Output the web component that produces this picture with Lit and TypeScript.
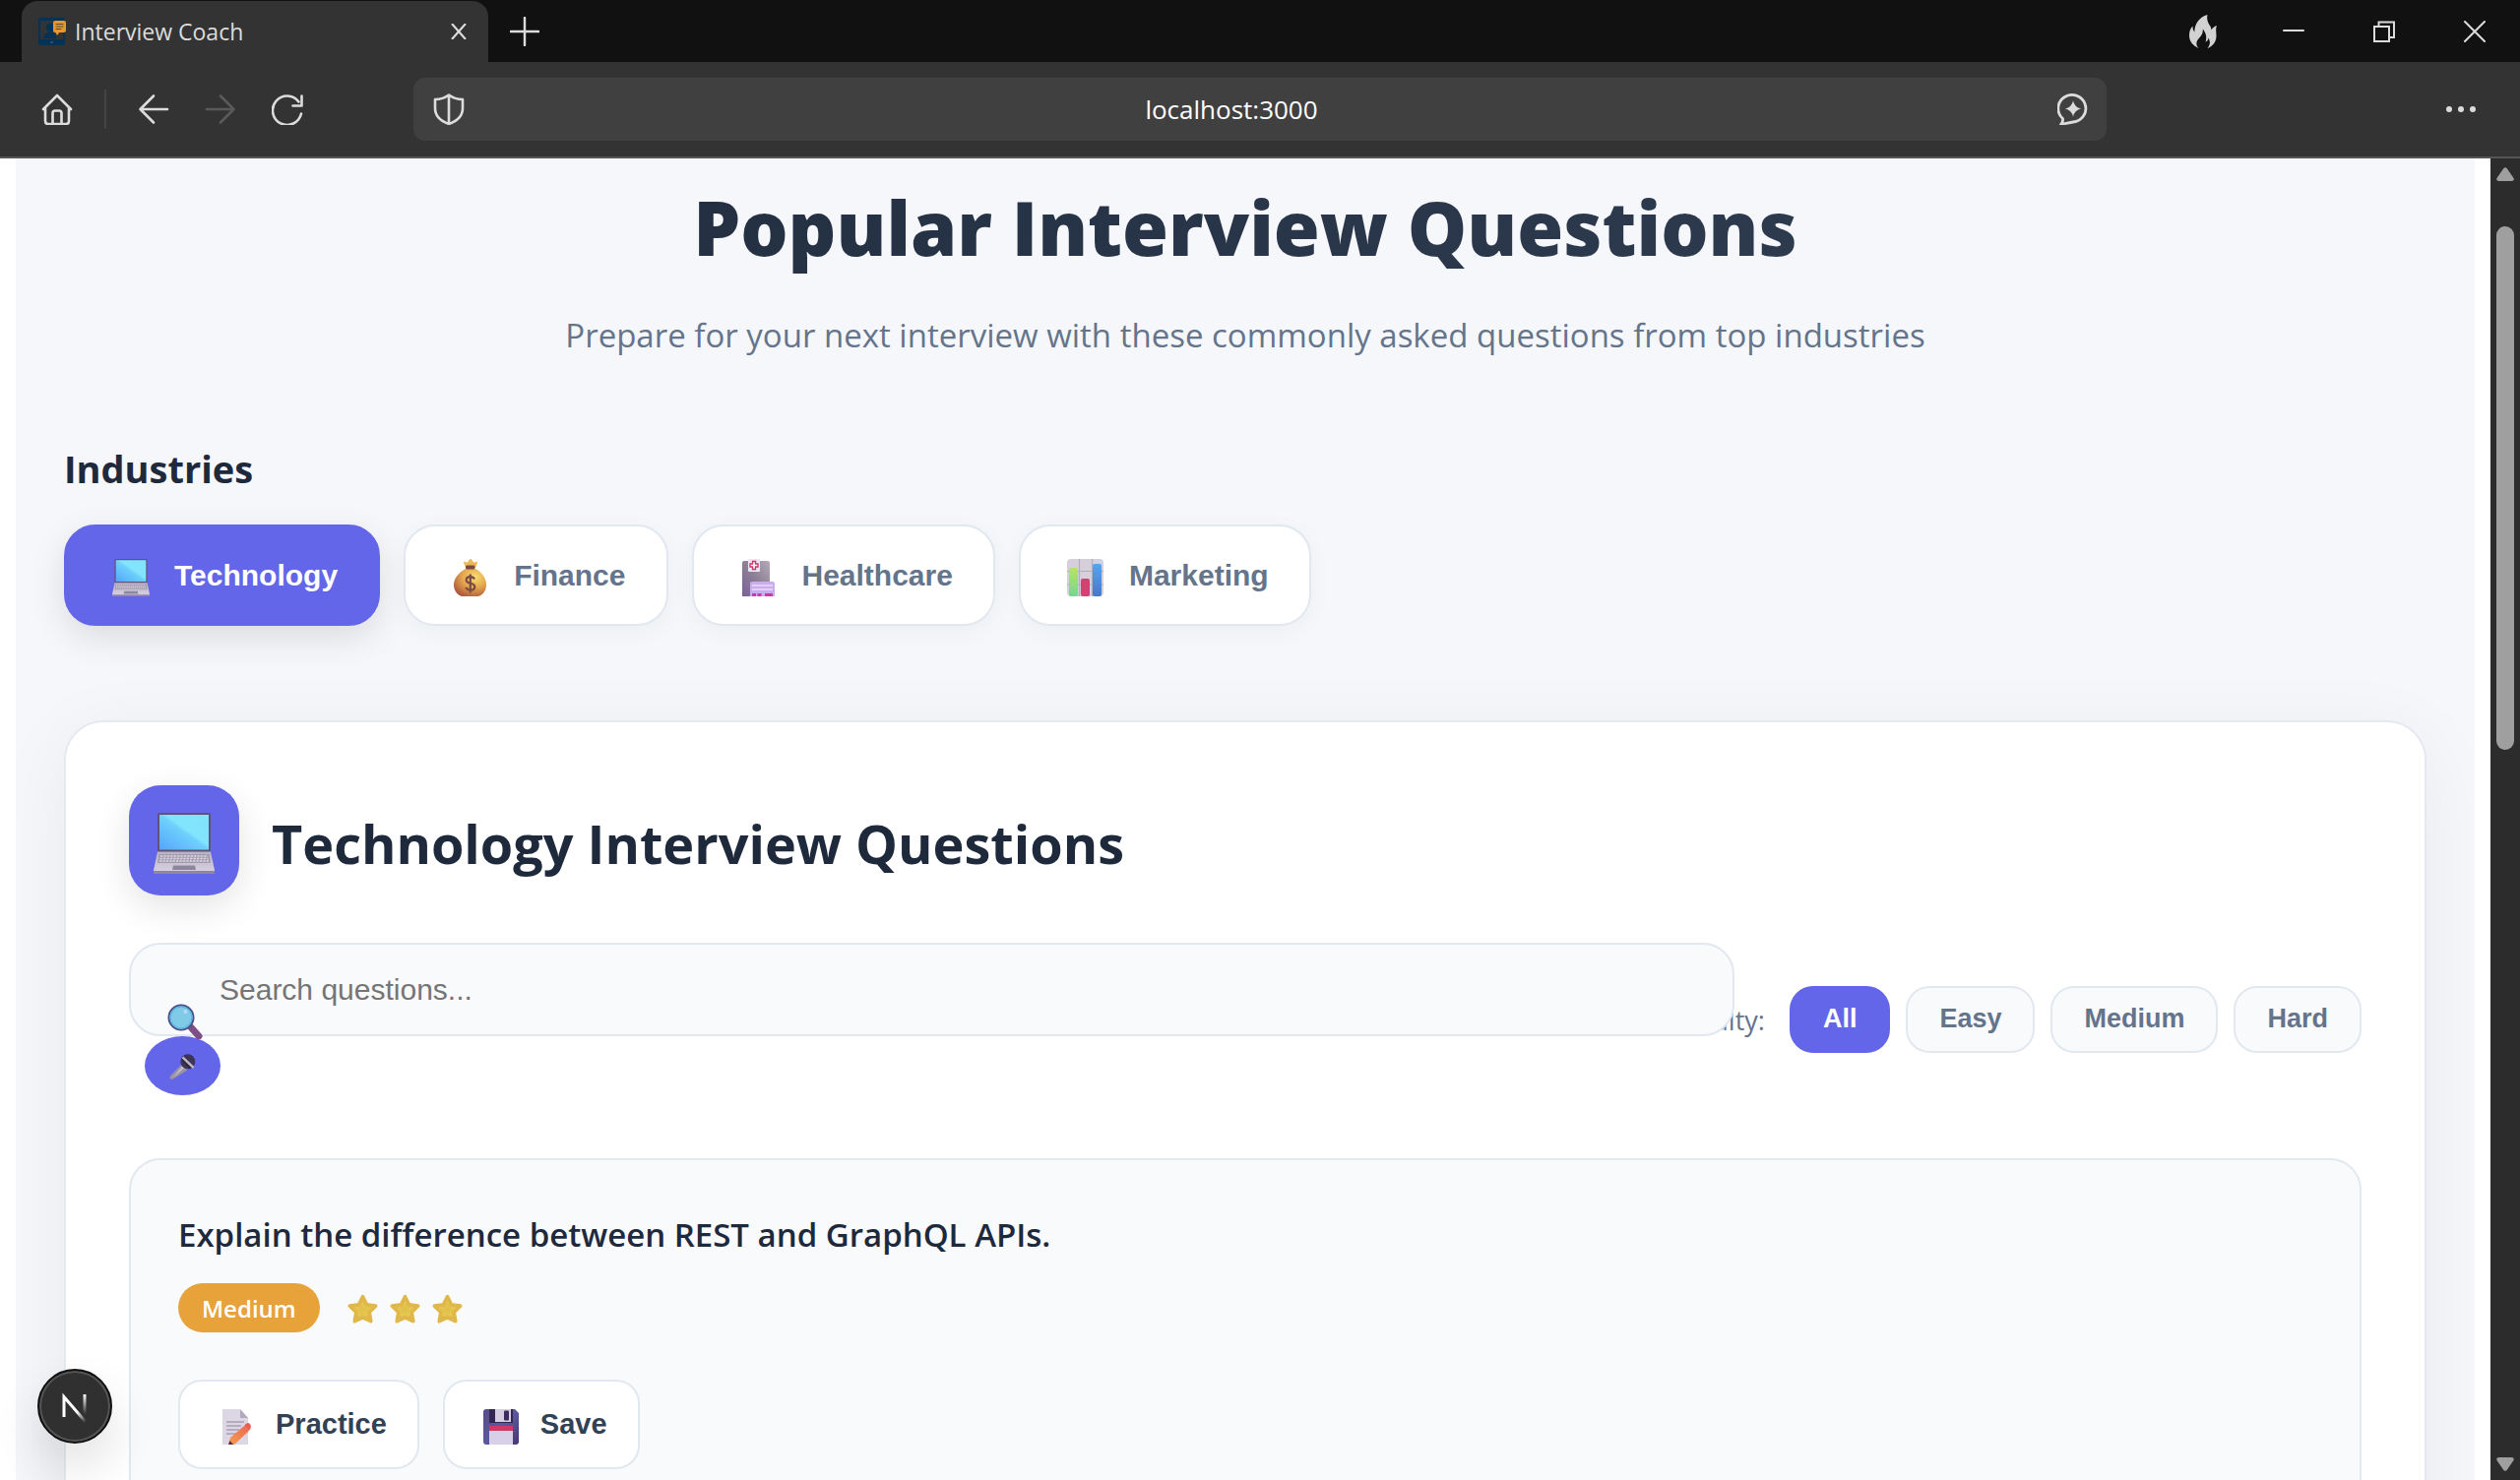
import { LitElement, html, css, svg } from "lit";
import { customElement, state } from "lit/decorators.js";
import { classMap } from "lit/directives/class-map.js";

const laptop = html`<svg viewBox="0 0 62 62" aria-hidden="true">
  <defs>
    <linearGradient id="screen" x1="0" y1="1" x2="1" y2="0">
      <stop offset="0" stop-color="#55a4fb" /><stop offset=".5" stop-color="#6fd0fc" /><stop offset=".56" stop-color="#82e4fd" /><stop offset="1" stop-color="#80e2fb" />
    </linearGradient>
    <linearGradient id="deck" x1="0" y1="0" x2="0" y2="1"><stop offset="0" stop-color="#b9b2c4" /><stop offset="1" stop-color="#dad3e4" /></linearGradient>
  </defs>
  <rect x="4" y="0" width="54" height="40" rx="2" fill="#5f5378" />
  <rect x="6" y="2" width="50" height="35.500" fill="url(#screen)" />
  <path d="M4 39.500h54l4 19v3.500H0v-3.500z" fill="url(#deck)" />
  <path d="M0 59h62v3H0z" fill="#8f869f" />
  <path d="M5.500 42h51l1.500 9H4z" fill="#a39cae" />
  <path d="M7 44h48M6.500 46.500h49M6 49h50" stroke="#dcd6e4" stroke-width="1.300" stroke-dasharray="2.400 1" />
  <path d="M20 53.500h22l1 4.500H19z" fill="#8e869c" />
</svg>`;

const moneyBag = html`<svg viewBox="0 0 40 38" aria-hidden="true">
  <defs>
    <radialGradient id="bag" cx=".65" cy=".3" r=".8"><stop offset="0" stop-color="#f6df70" /><stop offset=".5" stop-color="#e5a44c" /><stop offset="1" stop-color="#a8533c" /></radialGradient>
  </defs>
  <path d="M15 9c-1-3-2-4-2-6 1.500-1 2.500.500 3.500.500S18.500 0 20 0s2.500 3.500 3.500 3.500S26 2 27 3c0 2-1 3-2 6z" fill="#edb955" />
  <path d="M15 10C8 14 3 20 3 26c0 6 3 10 8 12h17c5-2 8-6 8-12 0-6-4-12-11-16z" fill="url(#bag)" />
  <rect x="15" y="6.500" width="9.500" height="4" rx="1.500" fill="#7a4b46" />
  <path d="M24 20.500c-1-1.800-2.500-2.300-4.300-2.300-2.300 0-4 1.200-4 3.200 0 4.600 8.600 2.200 8.600 6.800 0 2.200-2 3.400-4.400 3.400-2 0-3.800-.800-4.600-2.700M19.800 15.500v19" fill="none" stroke="#7a4b46" stroke-width="2.200" />
</svg>`;

const hospital = html`<svg viewBox="0 0 40 38" aria-hidden="true">
  <defs><linearGradient id="tower" x1="0" y1="1" x2="1" y2="0"><stop offset="0" stop-color="#7a5f9c" /><stop offset=".5" stop-color="#8c7f95" /><stop offset="1" stop-color="#b5abb8" /></linearGradient></defs>
  <path d="M3 4q0-2 2-2h24q2 0 2 2v34H3z" fill="url(#tower)" />
  <rect x="9" y="0" width="12" height="13" rx="1" fill="#ece3f5" />
  <path d="M13.500 2.500h3v2.500h2.500v3h-2.500v2.500h-3V8H11V5h2.500z" fill="#fff" stroke="#cf3162" stroke-width="1.300" />
  <path d="M11 25q0-2 2-2h21q2 0 2 2v13H11z" fill="#c9adec" />
  <path d="M13 27h21M13 31h21" stroke="#eadcf9" stroke-width="1.600" />
  <path d="M13 35h4v3h-4zM18.500 35h4v3h-4zM26 35h8v3h-8z" fill="#c63cae" />
</svg>`;

const barChart = html`<svg viewBox="0 0 40 38" aria-hidden="true">
  <defs>
    <linearGradient id="green" x1="0" y1="0" x2="0" y2="1"><stop offset="0" stop-color="#b9e364" /><stop offset="1" stop-color="#74d693" /></linearGradient>
    <linearGradient id="blue" x1="0" y1="0" x2="0" y2="1"><stop offset="0" stop-color="#56a5ef" /><stop offset="1" stop-color="#4877c8" /></linearGradient>
  </defs>
  <rect x="1" y="0" width="37" height="38" rx="4" fill="#d5d0dc" />
  <path d="M13.500 0v38M26.500 0v38M1 12.500h37M1 26h37" stroke="#b4aebb" stroke-width="1.200" />
  <rect x="3" y="9" width="9" height="29" rx="2" fill="url(#green)" />
  <rect x="15" y="20" width="9" height="18" rx="2" fill="#d34173" />
  <rect x="27" y="5" width="9" height="33" rx="2" fill="url(#blue)" />
</svg>`;

const memo = html`<svg viewBox="0 0 36 36" aria-hidden="true">
  <defs><linearGradient id="pencil" x1="1" y1="0" x2="0" y2="1"><stop offset="0" stop-color="#ef6650" /><stop offset="1" stop-color="#f4a04f" /></linearGradient></defs>
  <path d="M4 0h18l8 9v27H4z" fill="#ddd6e5" />
  <path d="M22 0l8 9h-8z" fill="#b2a9be" />
  <path d="M8 13h18M8 17h15M8 21h13M8 25h10" stroke="#a8a0b2" stroke-width="1.400" />
  <path d="M10 36l2-7 14-12 5 5-15 14z" fill="url(#pencil)" />
  <path d="M26 17l2-2.300q2-1.500 4 .500t.500 4.300L31 22z" fill="#ea5f52" />
  <path d="M10 36l1.500-4 3.500 4z" fill="#553146" />
</svg>`;

const floppy = html`<svg viewBox="0 0 36 36" aria-hidden="true">
  <defs><linearGradient id="disk" x1="0" y1="0" x2="1" y2="1"><stop offset="0" stop-color="#574a8c" /><stop offset=".5" stop-color="#5b58a0" /><stop offset="1" stop-color="#493573" /></linearGradient></defs>
  <path d="M3 0h29l4 4v29q0 3-3 3H3q-3 0-3-3V3q0-3 3-3z" fill="url(#disk)" />
  <rect x="6" y="0" width="24" height="14" fill="#332650" />
  <path d="M12 0h16v13H12z" fill="#d6cde2" />
  <rect x="21" y="1.500" width="5" height="10" rx="1" fill="#3a2b5b" />
  <rect x="6" y="17" width="24" height="5" fill="#cf3a60" />
  <path d="M6 22h24v14H6z" fill="#d8cfe8" />
</svg>`;

const magnifier = html`<svg viewBox="0 0 36 36" aria-hidden="true">
  <path d="M24 24l8 9" stroke="#7d4f86" stroke-width="7" stroke-linecap="round" />
  <circle cx="14" cy="14" r="12.500" fill="#7fcbe7" stroke="#4b4f86" stroke-width="2" />
  <circle cx="14" cy="14" r="11" fill="none" stroke="#5fb3e0" stroke-width="1.400" />
  <circle cx="18.500" cy="8" r="2" fill="#b9d9f2" />
</svg>`;

const microphone = html`<svg viewBox="0 0 28 28" aria-hidden="true">
  <path d="M13 11l6 6L4 26.500q-2 .800-3-.300t-.200-2.700z" fill="#9a93a2" />
  <path d="M13.500 13l2 2L4 25z" fill="#c5bfca" />
  <circle cx="19.500" cy="8" r="7.800" fill="#3d3352" />
  <path d="M13 6l3-3 9 10-3 3z" fill="#2b2240" />
  <path d="M14 3.500l11.500 11" stroke="#b9b3c4" stroke-width="2.600" />
</svg>`;

const star = html`<svg class="star" viewBox="0 0 28 28" aria-hidden="true">
  <defs><radialGradient id="gold"><stop offset="0" stop-color="#dfc04c" /><stop offset=".6" stop-color="#e9c750" /><stop offset="1" stop-color="#cf9f3c" /></radialGradient></defs>
  <path d="M14 2.500L17.600 9.800 25.800 11 20 16.700 21.400 25 14 21.400 6.600 25 8 16.700 2.200 11 10.400 9.800z" fill="url(#gold)" stroke="#e0b84a" stroke-width="3.400" stroke-linejoin="round" />
</svg>`;

const line = (body: unknown) => html`<svg class="glyph" viewBox="0 0 32 32" aria-hidden="true">${body}</svg>`;

const home = line(svg`<path d="M2 16L16 2l14 14M4 14.500V28q0 3 3 3h18q3 0 3-3V14.500M11.500 31V20q0-2.500 2.500-2.500h4q2.500 0 2.500 2.500v11" />`);
const back = line(svg`<path d="M30 16H2.500M16 2.500L2.500 16 16 29.500" />`);
const forward = line(svg`<path d="M2 16h27.500M16 2.500L29.500 16 16 29.500" />`);
const reload = line(svg`<path d="M30 20.500A14.700 14.700 0 1 1 27.500 8.500M30.500 2.500v10h-9" />`);
const shield = line(svg`<path d="M16 1.500q6 4.500 14 4.500v9q0 11-14 16Q2 26 2 15V6Q10 6 16 1.500zM16 2v28.500" />`);
const chat = line(svg`<path d="M5.500 25.500A14 13.800 0 1 1 16 29q-6 1-12.500 2.500 2.500-2.500 2-6z" stroke-width="2.800" /><path d="M16 7.500q1.500 6.500 8 8-6.500 1.500-8 8-1.500-6.500-8-8 6.500-1.500 8-8z" fill="currentColor" stroke="none" />`);
const cross = html`<svg class="small" viewBox="0 0 20 20" aria-hidden="true"><path d="M2 1l16 18M18 1L2 19" /></svg>`;

interface Choice { label: string; icon: unknown; }

const INDUSTRIES: Choice[] = [
  { label: "Technology", icon: laptop },
  { label: "Finance", icon: moneyBag },
  { label: "Healthcare", icon: hospital },
  { label: "Marketing", icon: barChart },
];
const LEVELS = ["All", "Easy", "Medium", "Hard"];

@customElement("browser-chrome")
export class BrowserChrome extends LitElement {
  static styles = css`
    :host { display: block; color: #dcdcdc; font-family: "Open Sans", "Noto Sans", sans-serif; }
    button { border: 0; padding: 0; background: none; color: inherit; font: inherit; display: grid; place-items: center; }
    svg { display: block; fill: none; stroke: currentColor; stroke-width: 2.6; stroke-linecap: round; stroke-linejoin: round; }
    .glyph { width: 32px; height: 32px; }
    .small { width: 16px; height: 16px; }
    .strip { display: flex; height: 63px; background: #111; padding-left: 22px; }
    .tab { display: flex; align-items: center; box-sizing: border-box; width: 474px; margin-top: 1px; padding: 0 22px 0 16px; border-radius: 16px 16px 0 0; background: #333; }
    .favicon { width: 30px; height: 30px; stroke: none; }
    .name { flex: 1; margin-left: 8px; font-size: 23px; line-height: 32px; }
    .new { width: 73px; }
    .new .glyph { width: 30px; height: 30px; }
    .window { display: flex; margin-left: auto; }
    .window button { width: 92px; }
    .window svg { width: 22px; height: 22px; stroke-width: 2; }
    .window .fire { width: 28px; height: 34px; fill: #d2d2d2; stroke: none; }
    .bar { display: flex; align-items: center; height: 96px; padding: 0 44px 0 42px; background: #333; border-bottom: 2px solid #555; }
    .rule { width: 2px; height: 40px; margin: 0 32px; background: #444; }
    .nav { display: flex; gap: 36px; }
    .off { color: #5a5a5a; }
    .url { display: flex; align-items: center; flex: 1; height: 64px; margin: 0 344px 0 112px; padding: 0 18px 0 20px; border-radius: 12px; background: #404040; }
    .address { flex: 1; min-width: 0; margin-right: 60px; padding: 0; border: 0; background: none; outline: 0; color: #fff; text-align: center; font: 26px/40px "Open Sans", "Noto Sans", sans-serif; }
  `;

  render() {
    return html`
      <div class="strip">
        <div class="tab">
          <svg class="favicon" viewBox="0 0 30 30" aria-hidden="true">
            <rect x="1" y="1" width="27" height="28" rx="2" fill="#023258" />
            <rect x="3" y="4" width="23" height="19" fill="#333" />
            <ellipse cx="13" cy="11" rx="4" ry="4.500" fill="#023258" />
            <path d="M6 22q0-6 7-6t7 6z" fill="#023258" />
            <rect x="16" y="4" width="13" height="12" rx="2" fill="#e8962e" />
            <path d="M18 15h5l-3 4z" fill="#e8962e" />
            <path d="M19 7.500h7M19 10h7M19 12.500h5" stroke="#5b4a32" stroke-width="1" />
            <circle cx="14.500" cy="26" r="1.300" fill="#33506b" />
          </svg>
          <span class="name">Interview Coach</span>
          <button aria-label="Close tab">${cross}</button>
        </div>
        <button class="new" aria-label="New tab">${line(svg`<path d="M16 1v30M1 16h30" />`)}</button>
        <div class="window">
          <button aria-label="Clear data"><svg class="fire" viewBox="0 0 28 34"><path d="M9.500 34C3 31 0 26.500 0 21c0-4 1-7 3.500-9.500 0 3 .500 4.500 1.800 6C5.500 9 10 2.500 18.500 0c-1 5 .500 8 2.800 11.500.800 1.300 1 2.500 1.200 4C23.500 13.500 25 12 28 11c-1.500 3-.500 6-.500 10.500 0 6-3.500 10.500-9 12.500 2-2.500 2.700-4.500 2.300-7-.300-1.500-.800-2.500-1.200-3.500-.300 2-1 3-3 4.200 1.500-5 .500-9-2.800-13.200.200 5-1.500 6.800-4 9.500C6.500 27.500 6.800 31 9.500 34z" /></svg></button>
          <button aria-label="Minimise"><svg viewBox="0 0 22 22"><path d="M1 10h20" /></svg></button>
          <button aria-label="Restore"><svg viewBox="0 0 22 22"><path d="M1 6h15v15H1zM5.500 6V1.500H21V17h-5" stroke-linejoin="miter" /></svg></button>
          <button aria-label="Close window"><svg viewBox="0 0 22 22"><path d="M1 1l20 20M21 1L1 21" /></svg></button>
        </div>
      </div>
      <div class="bar">
        <button aria-label="Home">${home}</button>
        <span class="rule"></span>
        <div class="nav">
          <button aria-label="Back">${back}</button>
          <button class="off" aria-label="Forward">${forward}</button>
          <button aria-label="Reload">${reload}</button>
        </div>
        <div class="url">
          <button aria-label="Privacy">${shield}</button>
          <input class="address" aria-label="Address" .value=${"localhost:3000"} />
          <button aria-label="Assistant">${chat}</button>
        </div>
        <button aria-label="More"><svg class="glyph" viewBox="0 0 32 32"><path d="M4 16h.010M16 16h.010M28 16h.010" stroke-width="6" /></svg></button>
      </div>
    `;
  }
}

@customElement("app-root")
export class AppRoot extends LitElement {
  @state() private industry = 0;
  @state() private level = 0;

  static styles = css`
    :host { display: flex; flex-direction: column; height: 100vh; overflow: hidden; background: #fff; color: #1e293b; font-family: "Open Sans", "Noto Sans", sans-serif; }
    h1, h2, h3, p { margin: 0; }
    button, input { font-family: "Liberation Sans", Arial, sans-serif; box-sizing: border-box; }
    svg { display: block; }
    .view { position: relative; display: flex; flex: 1; min-height: 0; }
    .page { flex: 1; min-width: 0; margin: 0 16px; padding: 22px 49px 0; overflow: hidden; background: #f5f7fb; }
    .title { background: linear-gradient(135deg, #1e293b, #334155); background-clip: text; color: transparent; text-align: center; font-size: 76px; font-weight: 800; line-height: 96px; }
    .lead { margin-top: 38px; text-align: center; color: #64748b; font-size: 33px; line-height: 48px; }
    .label { margin-top: 83px; font-size: 38px; font-weight: 700; line-height: 56px; }
    .tabs { display: flex; gap: 24px; margin-top: 29px; }
    .industry { display: flex; align-items: center; gap: 24px; height: 103px; padding: 0 41px 0 46px; border: 2px solid #e2e8f0; border-radius: 32px; background: #fff; color: #64748b; font-size: 30px; font-weight: 700; box-shadow: 0 6px 24px rgba(0, 0, 0, .04); }
    .industry svg { width: 40px; height: 38px; margin-top: 4px; }
    .industry.on { background: #6366e8; border-color: #6366e8; color: #fff; box-shadow: 0 12px 36px rgba(0, 0, 0, .11); }
    .panel { margin-top: 96px; padding: 64px; border: 2px solid #e5e9f0; border-radius: 40px; background: #fff; box-shadow: 0 16px 80px rgba(0, 0, 0, .06); }
    .head { display: flex; align-items: center; gap: 33px; }
    .emblem { display: grid; place-items: center; box-sizing: border-box; width: 112px; height: 112px; padding-top: 6px; border-radius: 32px; background: #6366e8; box-shadow: 0 12px 36px rgba(0, 0, 0, .11); }
    .emblem svg { width: 62px; height: 62px; }
    .topic { padding-top: 6px; font-size: 54px; font-weight: 700; line-height: 72px; }
    .tools { display: flex; align-items: center; gap: 24px; margin-top: 48px; }
    .search { position: relative; z-index: 1; flex: 1; min-width: 0; }
    .query { display: block; width: calc(100% + 137px); height: 95px; padding: 0 90px; border: 2px solid #e2e8f0; border-radius: 32px; background: #f9fafc; color: #1e293b; font-size: 30px; }
    .query::placeholder { color: #757575; opacity: 1; }
    .lens { position: absolute; left: 39px; top: 62px; width: 36px; height: 36px; }
    .mic { display: grid; place-items: center; width: 77px; height: 60px; margin-left: 16px; padding: 0; border: 0; border-radius: 50%; background: #6366e8; }
    .mic svg { width: 27px; height: 27px; margin-top: 2px; }
    .filter { display: flex; align-items: center; gap: 16px; }
    .caption { min-width: 144px; margin-right: 9px; padding-top: 2px; text-align: right; color: #64748b; font-size: 27px; font-weight: 500; line-height: 40px; }
    .level { height: 68px; padding: 0 32px; border: 2px solid #e2e8f0; border-radius: 24px; background: #f9fafc; color: #64748b; font-size: 27px; font-weight: 700; }
    .level.on { background: #6366e8; border-color: #6366e8; color: #fff; }
    .card { margin-top: 64px; padding: 52px 48px; border: 2px solid #e2e8f0; border-radius: 32px; background: #f9fafc; }
    .question { font-size: 33px; font-weight: 600; line-height: 48px; }
    .meta { display: flex; align-items: center; gap: 28px; margin-top: 25px; }
    .pill { padding: 6px 24px 4px; border-radius: 25px; background: #e7a23a; color: #fff; font-size: 24px; font-weight: 600; line-height: 40px; }
    .stars { display: flex; gap: 12px; padding-top: 2px; }
    .star { width: 31px; height: 31px; }
    .actions { display: flex; gap: 24px; margin-top: 48px; }
    .action { display: flex; align-items: center; gap: 22px; height: 91px; padding: 0 31px 0 39px; border: 2px solid #e2e8f0; border-radius: 24px; background: #fff; color: #334155; font-size: 29px; font-weight: 700; }
    .action svg { width: 36px; height: 36px; margin-top: 4px; }
    .scroll { display: flex; flex-direction: column; justify-content: space-between; align-items: center; width: 18px; padding: 9px 6px; background: #2c2c2c; }
    .scroll svg { width: 18px; height: 14px; fill: #9f9f9f; }
    .track { flex: 1; width: 18px; padding-top: 46px; }
    .thumb { height: 42.5%; border-radius: 9px; background: #9f9f9f; }
    .next { position: absolute; left: 38px; bottom: 37px; width: 76px; height: 76px; padding: 0; border: 2px solid #111; border-radius: 50%; background: #303030; box-shadow: inset 0 0 0 2px #555, 0 24px 48px rgba(0, 0, 0, .12); }
  `;

  render() {
    return html`
      <browser-chrome></browser-chrome>
      <div class="view">
        <main class="page">
          <h1 class="title">Popular Interview Questions</h1>
          <p class="lead">Prepare for your next interview with these commonly asked questions from top industries</p>
          <h3 class="label">Industries</h3>
          <div class="tabs">
            ${INDUSTRIES.map((item, i) => html`
              <button class=${classMap({ industry: true, on: i === this.industry })} @click=${() => (this.industry = i)}>${item.icon}<span>${item.label}</span></button>
            `)}
          </div>
          <section class="panel">
            <div class="head">
              <div class="emblem">${INDUSTRIES[this.industry].icon}</div>
              <h2 class="topic">${INDUSTRIES[this.industry].label} Interview Questions</h2>
            </div>
            <div class="tools">
              <div class="search">
                <input class="query" type="text" placeholder="Search questions..." aria-label="Search questions" />
                <span class="lens">${magnifier}</span>
                <button class="mic" aria-label="Voice search">${microphone}</button>
              </div>
              <div class="filter">
                <span class="caption">Difficulty:</span>
                ${LEVELS.map((name, i) => html`
                  <button class=${classMap({ level: true, on: i === this.level })} @click=${() => (this.level = i)}>${name}</button>
                `)}
              </div>
            </div>
            <article class="card">
              <h3 class="question">Explain the difference between REST and GraphQL APIs.</h3>
              <div class="meta">
                <span class="pill">Medium</span>
                <span class="stars">${[0, 1, 2].map(() => star)}</span>
              </div>
              <div class="actions">
                <button class="action">${memo}<span>Practice</span></button>
                <button class="action">${floppy}<span>Save</span></button>
              </div>
            </article>
          </section>
        </main>
        <div class="scroll" aria-hidden="true">
          <svg viewBox="0 0 18 14"><path d="M7 1.500q2-2.500 4 0l6.500 9.500q1 3-2 3h-13q-3 0-2-3z" /></svg>
          <div class="track"><div class="thumb"></div></div>
          <svg viewBox="0 0 18 14"><path d="M7 12.500q2 2.500 4 0L17.500 3q1-3-2-3h-13q-3 0-2 3z" /></svg>
        </div>
        <button class="next" aria-label="Developer tools">
          <svg viewBox="0 0 72 72">
            <defs>
              <linearGradient id="diag" x1="0" y1="0" x2="1" y2="1"><stop offset=".6" stop-color="#fff" /><stop offset="1" stop-color="#fff" stop-opacity="0" /></linearGradient>
              <linearGradient id="stem" gradientUnits="userSpaceOnUse" x1="0" y1="24" x2="0" y2="44"><stop offset="0" stop-color="#fff" /><stop offset="1" stop-color="#fff" stop-opacity="0" /></linearGradient>
            </defs>
            <path d="M25 47V26.500L47 52" fill="none" stroke="url(#diag)" stroke-width="3" />
            <path d="M44.500 24h3v20h-3z" fill="url(#stem)" />
          </svg>
        </button>
      </div>
    `;
  }
}
